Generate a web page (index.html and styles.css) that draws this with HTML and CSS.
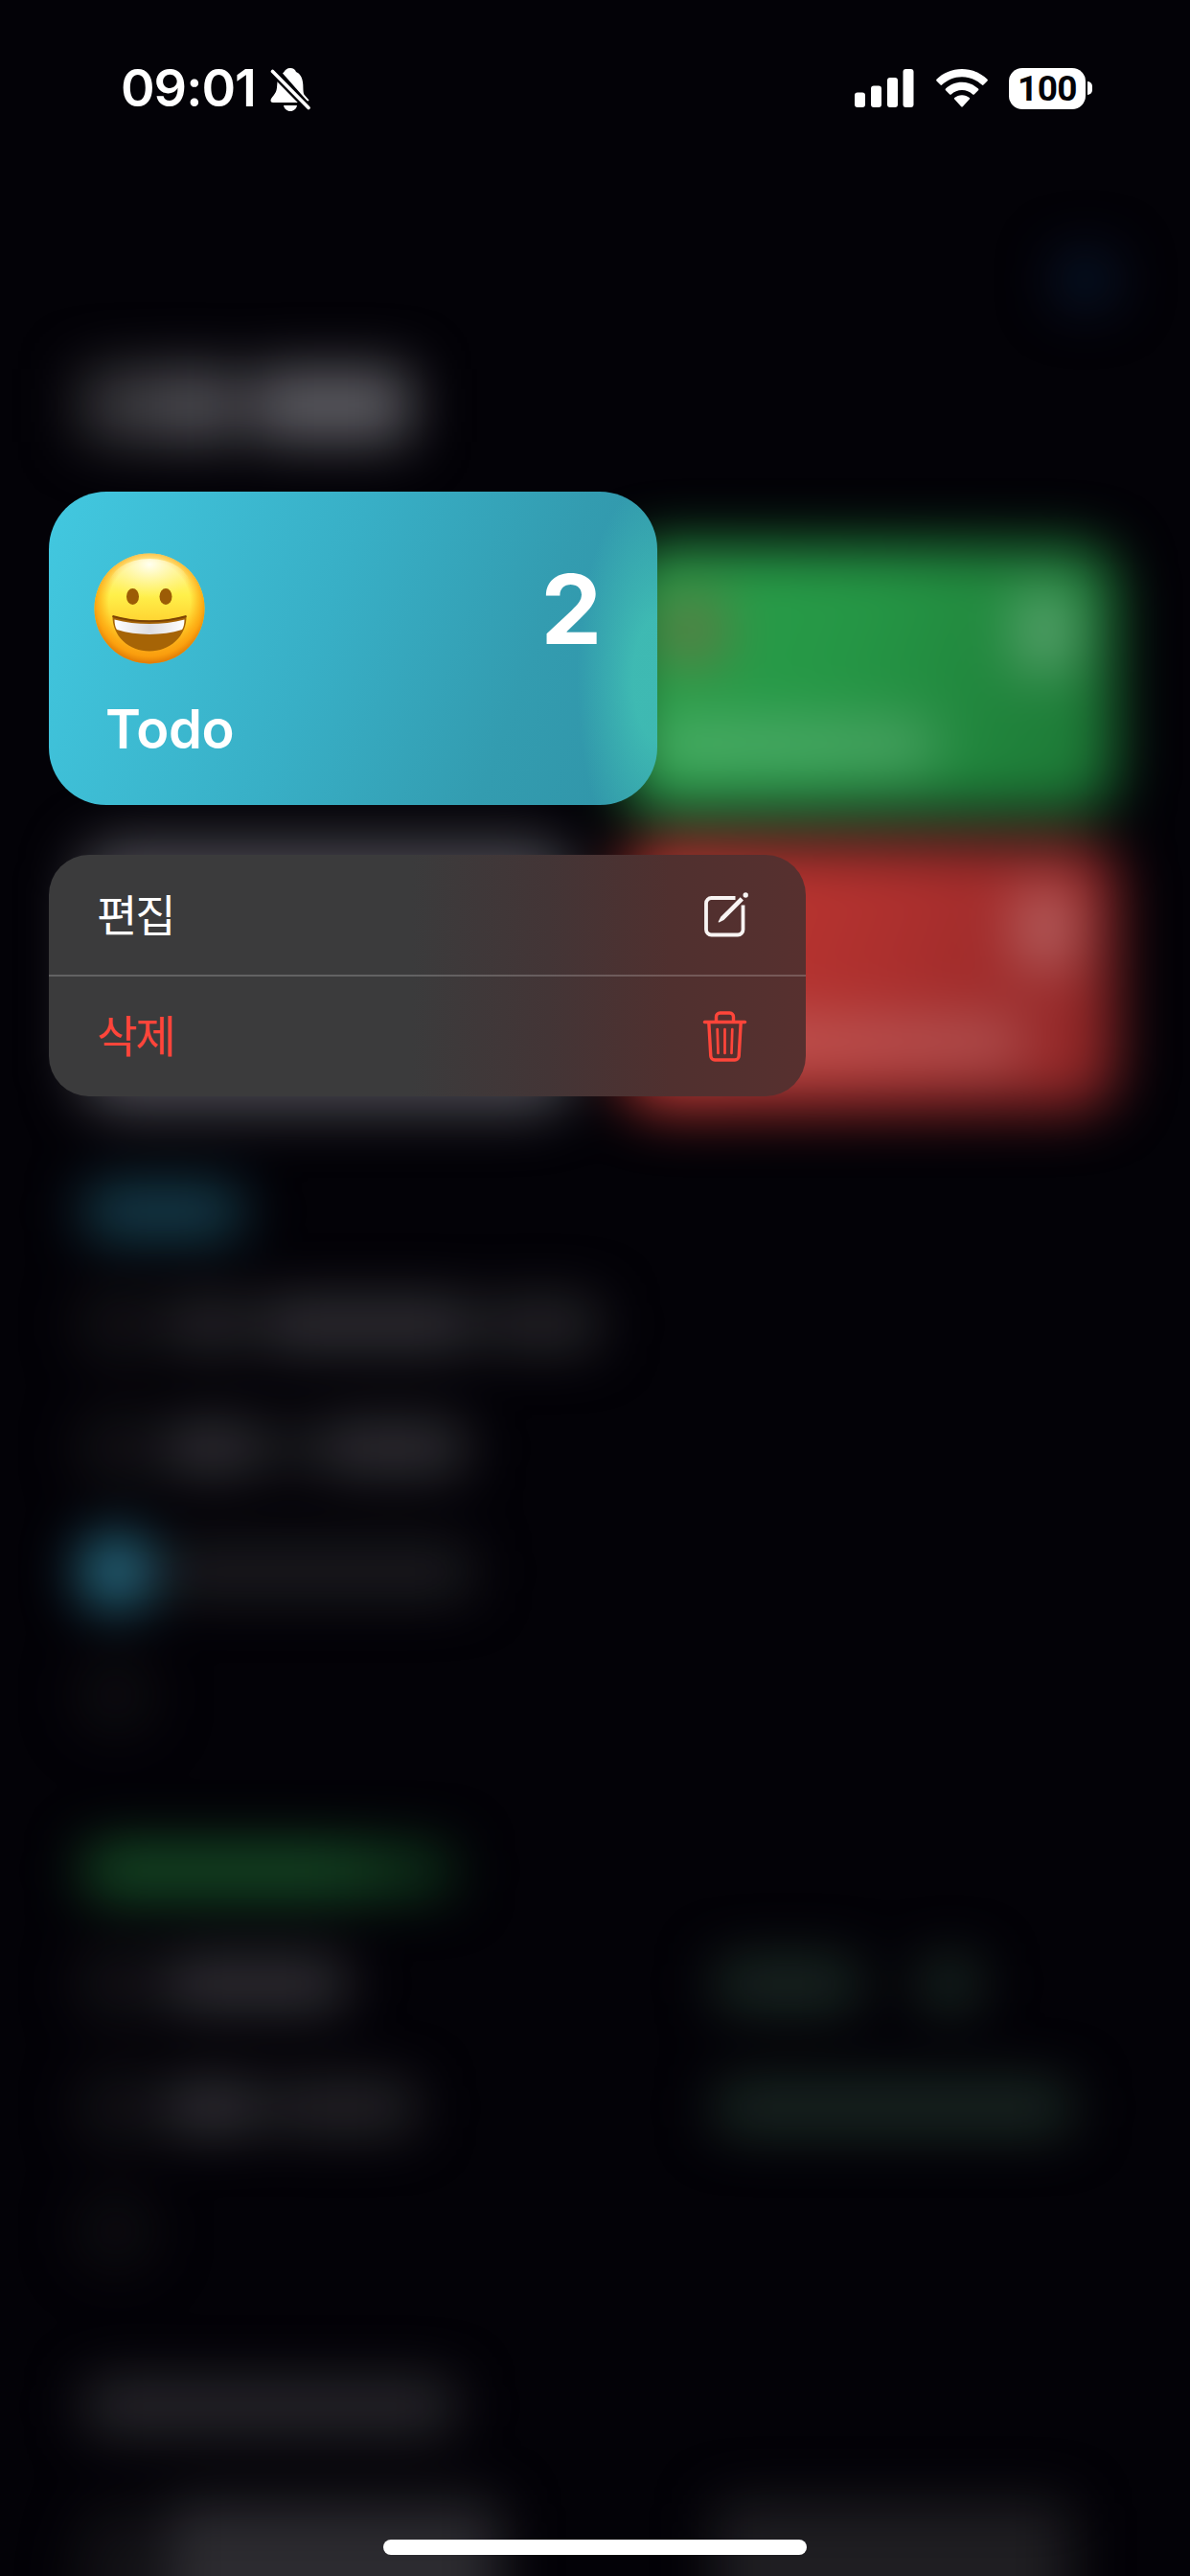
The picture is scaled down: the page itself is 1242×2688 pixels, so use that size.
FILE: index.html
```html
<!DOCTYPE html>
<html lang="ko">
<head>
    <meta charset="UTF-8">
    <meta name="viewport" content="width=device-width, initial-scale=1.0">
    <title>Todo</title>
    <link rel="stylesheet" href="styles.css">
</head>
<body>
    <div class="phone">
        <!-- Blurred list behind the context menu -->
        <div class="backdrop" aria-hidden="true">
            <div class="nav"><span class="nav-button"></span></div>
            <div class="title"><span class="title-a"></span><span class="title-b"></span></div>
            <div class="tiles">
                <div class="tile tile-hidden"></div>
                <div class="tile tile-green">
                    <div class="tile-head"><span class="tile-emoji"></span><span class="tile-count"></span></div>
                    <span class="tile-label"></span>
                </div>
                <div class="tile tile-grey"></div>
                <div class="tile tile-red">
                    <div class="tile-head"><span></span><span class="tile-count"></span></div>
                    <span class="tile-label tile-label-long"></span>
                </div>
            </div>

            <div class="section">
                <div class="heading"><span class="bar blue"></span></div>
                <div class="row"><span class="check"></span><span class="bar w90 dim"></span><span class="bar w220"></span><span class="bar w120 dim"></span></div>
                <div class="row"><span class="check"></span><span class="bar w100"></span><span class="bar w40 faint"></span><span class="bar w150"></span></div>
                <div class="row"><span class="check done"></span><span class="bar w320 faint"></span></div>
                <div class="row"><span class="check empty"></span></div>
            </div>

            <div class="section">
                <div class="heading"><span class="bar green"></span></div>
                <div class="row">
                    <span class="check"></span><span class="bar w190"></span>
                    <div class="date"><span class="bar w150 mint"></span><span class="bar w60 mint"></span></div>
                </div>
                <div class="row">
                    <span class="check"></span><span class="bar w100"></span><span class="bar w150 dim"></span>
                    <div class="date"><span class="bar w370 mint"></span></div>
                </div>
                <div class="row"><span class="check empty"></span></div>
            </div>

            <div class="section">
                <div class="heading"><span class="bar grey"></span></div>
                <div class="row tall">
                    <span class="check"></span><span class="bar w350"></span>
                    <div class="date"><span class="bar w370 dim"></span></div>
                </div>
            </div>
        </div>

        <div class="overlay">
            <div class="status-bar">
                <div class="status-left">
                    <span class="time">09:01</span>
                    <svg class="bell" viewBox="0 0 42 46" width="42" height="46">
                        <path fill="#fff" d="M21 1c-3.300 0-6 2-7 5l22 24.500c-1.500-3-1.500-6-1.700-12C34 10.500 30.500 6.500 27 5c-1-2.500-3-4-6-4z"/>
                        <path fill="#fff" d="M13 6.500l1.500-1.500 26 29.500c-.6 1.200-1.500 1.200-2.500.3z"/>
                        <path fill="#fff" d="M7.500 15c-.6 8-.5 10-3.500 14-2.500 3-3.500 4.500-3.500 6 0 1.200 1 2 2.500 2h26z"/>
                        <path fill="#fff" d="M14 40h14c-.6 3.500-3.500 6-7 6s-6.400-2.500-7-6z"/>
                        <path stroke="#030207" stroke-width="8" d="M2.500 4.500l37.500 38"/>
                        <path stroke="#fff" stroke-width="3.600" stroke-linecap="round" d="M2.500 4.500l37.500 38"/>
                    </svg>
                </div>
                <div class="status-right">
                    <svg class="signal" viewBox="0 0 62 40" width="62" height="40" fill="#fff">
                        <rect x="0" y="24.500" width="11" height="15.500" rx="3"/>
                        <rect x="17" y="17.500" width="11" height="22.500" rx="3"/>
                        <rect x="34" y="9" width="11" height="31" rx="3"/>
                        <rect x="50.500" y="0" width="11" height="40" rx="3"/>
                    </svg>
                    <svg class="wifi" viewBox="0 0 54 40" width="54" height="40" fill="#fff">
                        <path d="M27 0C16.500 0 7 4.200.5 10.800c-.5.500-.5 1.100 0 1.600l4 4.200c.5.500 1.100.5 1.600 0C11.500 11.500 18.800 8.200 27 8.200s15.500 3.300 20.900 8.400c.5.500 1.100.5 1.600 0l4-4.200c.5-.5.500-1.100 0-1.600C47 4.200 37.500 0 27 0z"/>
                        <path d="M27 13.800c-6.600 0-12.600 2.600-17 6.800-.5.500-.5 1.100 0 1.600l4.200 4.200c.5.500 1.100.5 1.600 0 3-2.700 6.900-4.300 11.200-4.300s8.200 1.600 11.200 4.300c.5.500 1.100.5 1.600 0l4.200-4.200c.5-.5.500-1.100 0-1.600-4.400-4.200-10.400-6.800-17-6.800z"/>
                        <path d="M27 27.200c-3 0-5.700 1.100-7.800 2.900-.5.400-.5 1.100 0 1.500l7 7.600c.5.500 1.100.5 1.600 0l7-7.600c.5-.4.5-1.100 0-1.500-2.100-1.800-4.800-2.900-7.800-2.900z"/>
                    </svg>
                    <div class="battery">
                        <span class="battery-body">100</span>
                        <span class="battery-cap"></span>
                    </div>
                </div>
            </div>

            <div class="card">
                <div class="card-head">
                    <svg class="emoji" viewBox="0 0 116 116" width="116" height="116">
                        <defs>
                            <linearGradient id="face" x1="0" y1="0" x2="0" y2="1">
                                <stop offset="0" stop-color="#fff6a8"/>
                                <stop offset=".38" stop-color="#fff04a"/>
                                <stop offset=".65" stop-color="#ffd02e"/>
                                <stop offset="1" stop-color="#f6a01a"/>
                            </linearGradient>
                            <radialGradient id="rim" cx=".5" cy=".45" r=".56">
                                <stop offset=".66" stop-color="#ff9a00" stop-opacity="0"/>
                                <stop offset=".86" stop-color="#fb9a08" stop-opacity=".75"/>
                                <stop offset="1" stop-color="#d97204"/>
                            </radialGradient>
                            <radialGradient id="shine" cx=".5" cy=".1" r=".6">
                                <stop offset="0" stop-color="#fffff0"/>
                                <stop offset="1" stop-color="#fff59a" stop-opacity="0"/>
                            </radialGradient>
                            <linearGradient id="teeth" x1="0" y1="0" x2="1" y2="0">
                                <stop offset="0" stop-color="#fff"/>
                                <stop offset=".5" stop-color="#dddde2"/>
                                <stop offset="1" stop-color="#fff"/>
                            </linearGradient>
                        </defs>
                        <circle cx="58" cy="58" r="57.500" fill="url(#face)"/>
                        <circle cx="58" cy="58" r="57.500" fill="url(#rim)"/>
                        <ellipse cx="58" cy="36" rx="43" ry="30" fill="url(#shine)"/>
                        <ellipse cx="40.500" cy="45.500" rx="6.500" ry="8.500" fill="#9c5c06"/>
                        <ellipse cx="75" cy="45.500" rx="6.500" ry="8.500" fill="#9c5c06"/>
                        <path fill="#a66406" d="M19.500 65.500c24 7 53 7 77 0C97 87 79 102.500 58 102.500S19 87 19.500 65.500z"/>
                        <path fill="url(#teeth)" d="M21.500 69.500c23 6 50 6 73 0 0 4.500-1 8.500-2.500 10.500-21 6.500-47 6.500-68 0-1.500-2-2.500-6-2.500-10.500z"/>
                        <path fill="none" stroke="#7c4304" stroke-width="2" d="M19.500 66c24 7 53 7 77 0"/>
                    </svg>
                    <span class="card-count">2</span>
                </div>
                <div class="card-title">Todo</div>
            </div>

            <div class="menu">
                <div class="menu-item">
                    <span class="menu-label">편집</span>
                    <svg viewBox="0 0 50 50" width="50" height="50" fill="none" stroke="#f8f4f3" stroke-width="3.800">
                        <path stroke-linecap="butt" d="M34.500 7H9.500a5.500 5.500 0 0 0-5.500 5.500V40a5.500 5.500 0 0 0 5.500 5.500H37a5.500 5.500 0 0 0 5.500-5.500V14.500"/>
                        <path fill="#f8f4f3" stroke="none" d="M39.700 6.200l3.300 3.300-20.500 20.500-5 2.500c-.6.300-1-.1-.8-.7l2.500-5z"/>
                        <circle cx="45.200" cy="4" r="2.700" fill="#f8f4f3" stroke="none"/>
                    </svg>
                </div>
                <div class="menu-item danger">
                    <span class="menu-label">삭제</span>
                    <svg viewBox="0 0 50 54" width="50" height="54" fill="none" stroke="#ff453a" stroke-width="3.400" stroke-linecap="round" stroke-linejoin="round">
                        <path d="M4.500 12.500h42"/>
                        <path d="M16.500 12V7a4 4 0 0 1 4-4h10a4 4 0 0 1 4 4v5"/>
                        <path d="M8.800 13l2 35a4.200 4.200 0 0 0 4.200 4h21a4.200 4.200 0 0 0 4.200-4l2-35"/>
                        <path stroke-width="2.700" d="M17.700 20l.8 25M25.500 20v25M33.300 20l-.8 25"/>
                    </svg>
                </div>
            </div>

            <div class="home-indicator"></div>
        </div>
    </div>
</body>
</html>
```

FILE: styles.css
```css
* {
    box-sizing: border-box;
    margin: 0;
    padding: 0;
}

body {
    background-color: #030207;
    color: #ffffff;
    font-family: Inter, "Noto Sans CJK KR", sans-serif;
}

.phone {
    position: relative;
    width: 1242px;
    height: 2688px;
    overflow: hidden;
    background-color: #030207;
}

/* Backdrop */
.backdrop {
    height: 2800px;
    padding: 264px 77px 0 83px;
    filter: blur(29px);
}

.nav {
    display: flex;
    justify-content: flex-end;
}

.nav-button {
    width: 64px;
    height: 56px;
    border-radius: 28px;
    background-color: #081730;
}

.title {
    display: flex;
    gap: 18px;
    margin-top: 65px;
    height: 76px;
}

.title-a {
    width: 162px;
    background: linear-gradient(90deg, #302f33, #5c5b61);
}

.title-b {
    width: 165px;
    background-color: #5f5e64;
}

.tiles {
    display: grid;
    grid-template-columns: 515px 515px;
    grid-template-rows: 280px 280px;
    gap: 30px 52px;
    margin-top: 108px;
}

.tile {
    display: flex;
    flex-direction: column;
    justify-content: space-between;
    padding: 48px 44px 48px 34px;
    border-radius: 40px;
}

.tile-hidden {
    visibility: hidden;
}

.tile-green {
    background: linear-gradient(110deg, #299f4a 10%, #259645 45%, #1c7434);
}

.tile-red {
    background: linear-gradient(110deg, #c23832 10%, #ad302e 50%, #8b2526);
}

.tile-grey {
    background-color: #4e4d55;
}

.tile-head {
    display: flex;
    justify-content: space-between;
}

.tile-emoji {
    width: 76px;
    height: 80px;
    border-radius: 50%;
    background-color: #5c7a42;
}

.tile-count {
    width: 58px;
    height: 84px;
    background-color: rgba(255, 255, 255, 0.27);
}

.tile-label {
    width: 290px;
    height: 46px;
    background-color: rgba(255, 255, 255, 0.2);
}

.tile-label-long {
    width: 385px;
}

.section {
    margin-bottom: 66px;
}

.tiles + .section {
    margin-top: 52px;
}

.heading,
.row {
    display: flex;
    align-items: center;
}

.heading {
    height: 106px;
    padding-left: 6px;
}

.row {
    height: 129px;
    gap: 12px;
}

.bar {
    height: 50px;
    border-radius: 10px;
    background-color: #37363b;
}

.check {
    width: 76px;
    height: 76px;
    border-radius: 50%;
    background-color: #141317;
}

.check.done {
    background-color: #2c7b94;
}

.check.empty {
    background-color: #0f0e12;
}

.bar.blue {
    width: 162px;
    background-color: #19495a;
}

.bar.green {
    width: 385px;
    background: linear-gradient(90deg, #18562a 65%, #0c2c17);
}

.bar.grey {
    width: 385px;
    background-color: #2e2d32;
}

.bar.dim {
    background-color: #2a292d;
}

.bar.faint {
    background-color: #202024;
}

.bar.mint {
    background-color: #1d2d27;
}

.w40 { width: 40px; }
.w60 { width: 60px; }
.w90 { width: 90px; }
.w100 { width: 100px; }
.w120 { width: 120px; }
.w150 { width: 150px; }
.w190 { width: 190px; }
.w220 { width: 220px; }
.w320 { width: 320px; }
.w350 { width: 350px; }
.w370 { width: 370px; }

.date {
    display: flex;
    gap: 64px;
    width: 370px;
    margin-left: auto;
    margin-right: 48px;
}

.row.tall {
    align-items: stretch;
    height: 220px;
    padding-top: 48px;
}

.row.tall .bar,
.row.tall .check {
    height: 170px;
}

.row.tall .bar {
    background-color: #2c2b30;
}

.row.tall .bar.dim {
    background-color: #1f1e22;
}

/* Overlay */
.overlay {
    position: absolute;
    inset: 0;
    display: flex;
    flex-direction: column;
    align-items: flex-start;
    padding: 62px 51px 22px;
}

.status-bar {
    display: flex;
    align-items: center;
    justify-content: space-between;
    width: 100%;
    height: 60px;
    padding: 0 52px 0 75px;
}

.status-left,
.status-right {
    display: flex;
    align-items: center;
}

.time {
    width: 148px;
    font-size: 54px;
    font-weight: 600;
    line-height: 60px;
    letter-spacing: -1px;
    white-space: nowrap;
}

.bell {
    margin: 1px 0 0 8px;
}

.wifi {
    margin: 0 22px 0 23px;
}

.battery {
    display: flex;
    align-items: center;
    gap: 3px;
}

.battery-body {
    width: 80px;
    height: 43px;
    margin-right: -1px;
    border-radius: 14px;
    background-color: #ffffff;
    color: #030207;
    font-family: Roboto, sans-serif;
    font-size: 37px;
    font-weight: 700;
    line-height: 43px;
    letter-spacing: -0.5px;
    text-align: center;
}

.battery-cap {
    width: 5px;
    height: 14px;
    margin-right: -1px;
    border-radius: 0 5px 5px 0;
    background-color: #ffffff;
}

.card {
    width: 635px;
    height: 327px;
    margin-top: 391px;
    padding: 64px 58px 0 47px;
    border-radius: 60px;
    background:
        radial-gradient(ellipse 84px 210px at 100% 60%, rgba(68, 200, 182, 0.7) 30%, rgba(68, 200, 182, 0)),
        linear-gradient(110deg, #42c8e0, #38afc6 45%, #339cb0 75%, #3094a7);
}

.card-head {
    display: flex;
    align-items: center;
    justify-content: space-between;
    height: 116px;
}

.card-count {
    font-size: 101px;
    font-weight: 700;
    line-height: 116px;
}

.card-title {
    margin-top: 34px;
    padding-left: 12px;
    font-size: 56px;
    font-weight: 600;
    line-height: 68px;
    letter-spacing: -0.4px;
}

.menu {
    width: 790px;
    margin-top: 52px;
    border-radius: 42px;
    background: linear-gradient(90deg, #3b3b3c 48%, #433536 66%, #50302f 82%, #57302f);
}

.menu-item {
    display: flex;
    align-items: center;
    justify-content: space-between;
    height: 125px;
    padding: 0 58px 0 50px;
    font-size: 46px;
    letter-spacing: -2px;
}

.menu-label {
    padding-bottom: 6px;
}

.menu-item + .menu-item {
    height: 127px;
    padding-right: 60px;
    padding-bottom: 2px;
    border-top: 2px solid rgba(255, 255, 255, 0.2);
}

.danger {
    color: #ff453a;
}

.home-indicator {
    align-self: center;
    width: 442px;
    height: 16px;
    margin-top: auto;
    border-radius: 8px;
    background-color: #ffffff;
}
```
